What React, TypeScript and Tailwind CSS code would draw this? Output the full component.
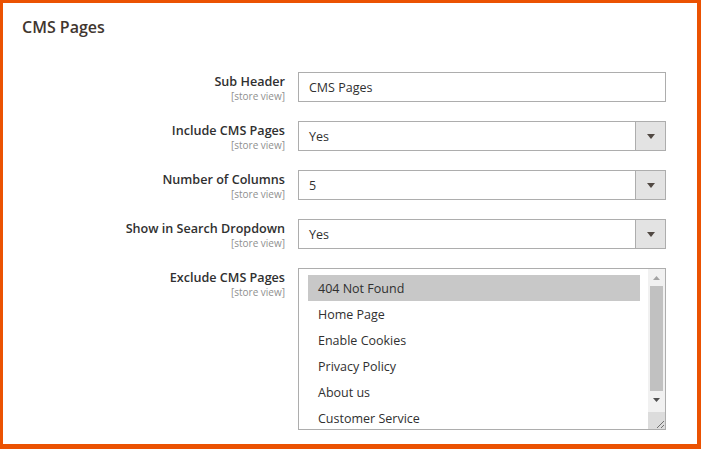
import React from "react";

const font = { fontFamily: '"Open Sans", "Liberation Sans", sans-serif' };

function Label({ text }: { text: string }) {
  return (
    <div className="w-[282px] shrink-0 flex flex-col items-end pt-[1px]">
      <div className="text-[12.6px] leading-[17px] font-semibold text-[#303030]">{text}</div>
      <div className="text-[10px] leading-[12px] text-[#8f8f8f]">[store view]</div>
    </div>
  );
}

function Select({ value }: { value: string }) {
  return (
    <div className="ml-[13px] w-[368px] h-[30px] border border-[#adadad] bg-white flex">
      <div className="flex-1 pl-[10px] pt-[2px] flex items-center text-[12.5px] text-[#303030]">{value}</div>
      <div className="w-[30px] h-full bg-[#e3e3e3] border-l border-[#adadad] flex items-center justify-center">
        <svg width="8" height="5" viewBox="0 0 8 5">
          <path d="M0 0 L8 0 L4 5 Z" fill="#514943" />
        </svg>
      </div>
    </div>
  );
}

const options = ["404 Not Found", "Home Page", "Enable Cookies", "Privacy Policy", "About us", "Customer Service"];

export default function App() {
  return (
    <div
      style={font}
      className="w-[701px] h-[449px] bg-white border-[#eb5202] border-l-[3px] border-t-[3px] border-r-[4px] border-b-[5px] overflow-hidden"
    >
      <div className="pl-[19px] pt-[14px] text-[16px] leading-[20px] font-semibold text-[#41362f]">CMS Pages</div>
      <div className="mt-[35px] flex flex-col gap-[19px]">
        <div className="flex">
          <Label text="Sub Header" />
          <div className="ml-[13px] w-[368px] h-[30px] border border-[#adadad] bg-white pl-[10px] pt-[2px] flex items-center text-[12.5px] text-[#303030]">
            CMS Pages
          </div>
        </div>
        <div className="flex">
          <Label text="Include CMS Pages" />
          <Select value="Yes" />
        </div>
        <div className="flex">
          <Label text="Number of Columns" />
          <Select value="5" />
        </div>
        <div className="flex">
          <Label text="Show in Search Dropdown" />
          <Select value="Yes" />
        </div>
        <div className="flex">
          <Label text="Exclude CMS Pages" />
          <div className="ml-[13px] w-[368px] h-[162px] border border-[#adadad] bg-white flex">
            <div className="flex-1 pl-[9px] pr-[8px] pt-[6px] flex flex-col">
              {options.map((o, i) => (
                <div
                  key={o}
                  className={
                    "h-[26px] shrink-0 pl-[10px] pt-[2px] flex items-center text-[12.5px] text-[#303030] " +
                    (i === 0 ? "bg-[#c8c8c8]" : "")
                  }
                >
                  {o}
                </div>
              ))}
            </div>
            <div className="w-[17px] h-full bg-[#f1f1f1] flex flex-col">
              <div className="h-[17px] flex items-center justify-center">
                <svg width="7" height="4" viewBox="0 0 7 4">
                  <path d="M0 4 L7 4 L3.5 0 Z" fill="#a3a3a3" />
                </svg>
              </div>
              <div className="mx-[2px] h-[105px] bg-[#c1c1c1]" />
              <div className="h-[17px] flex items-center justify-center">
                <svg width="7" height="4" viewBox="0 0 7 4">
                  <path d="M0 0 L7 0 L3.5 4 Z" fill="#505050" />
                </svg>
              </div>
              <div className="flex-1" />
              <div className="h-[17px] bg-[#dcdcdc] flex items-end justify-end">
                <svg width="12" height="12" viewBox="0 0 12 12">
                  <path d="M11 4 L4 11 M11 8 L8 11" stroke="#707070" strokeWidth="1" />
                </svg>
              </div>
            </div>
          </div>
        </div>
      </div>
    </div>
  );
}
